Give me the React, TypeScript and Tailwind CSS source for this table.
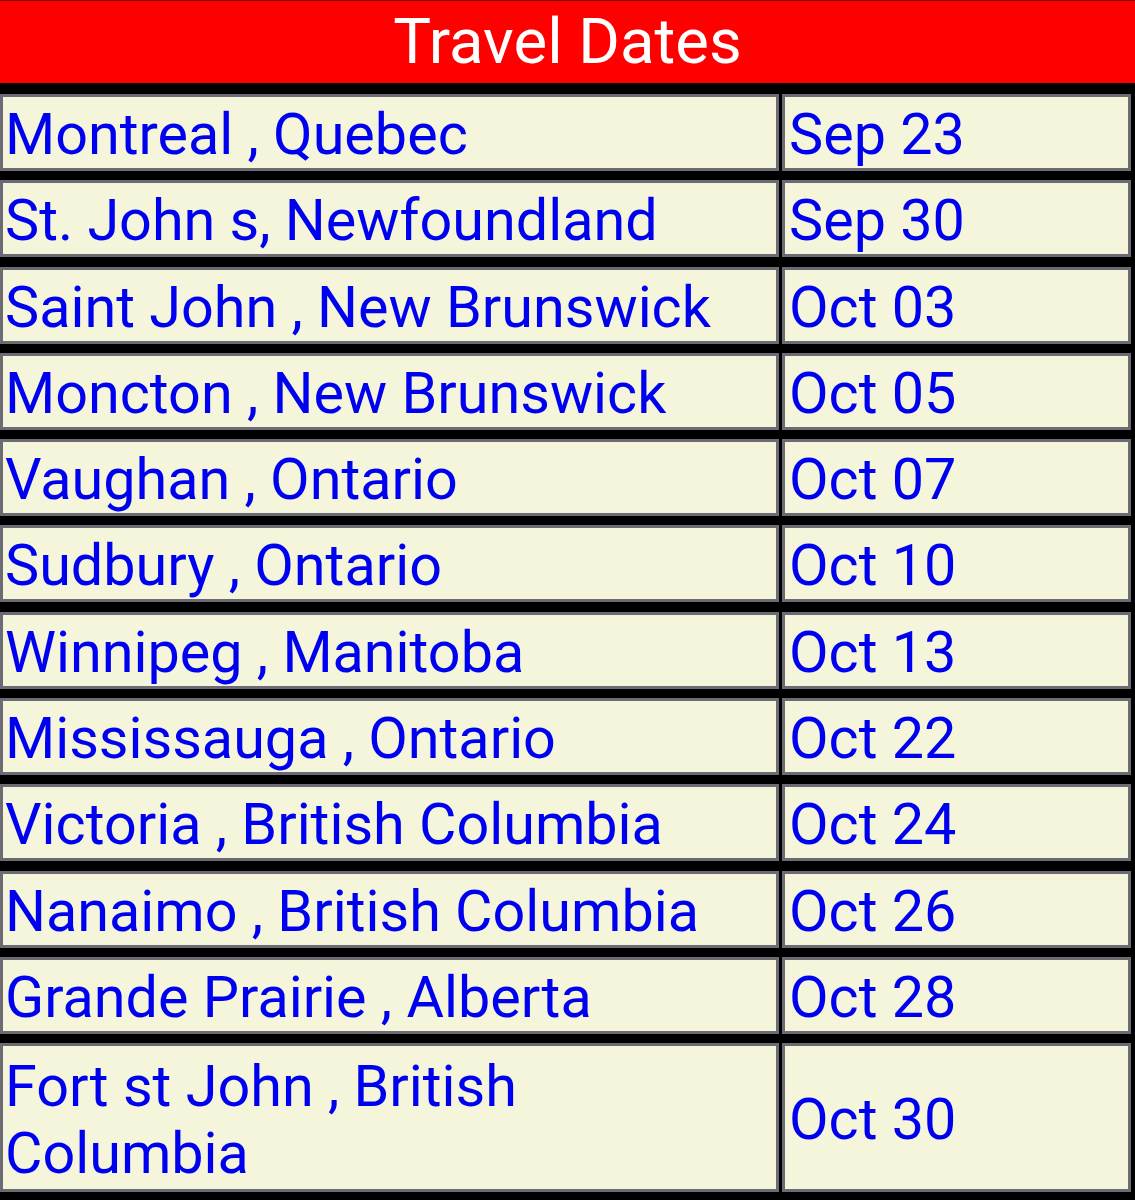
const trips = [
  { place: "Montreal , Quebec", date: "Sep 23" },
  { place: "St. John s, Newfoundland", date: "Sep 30" },
  { place: "Saint John , New Brunswick", date: "Oct 03" },
  { place: "Moncton , New Brunswick", date: "Oct 05" },
  { place: "Vaughan , Ontario", date: "Oct 07" },
  { place: "Sudbury , Ontario", date: "Oct 10" },
  { place: "Winnipeg , Manitoba", date: "Oct 13" },
  { place: "Mississauga , Ontario", date: "Oct 22" },
  { place: "Victoria , British Columbia", date: "Oct 24" },
  { place: "Nanaimo , British Columbia", date: "Oct 26" },
  { place: "Grande Prairie , Alberta", date: "Oct 28" },
  { place: "Fort st John , British Columbia", date: "Oct 30", tall: true },
];

const cell =
  "flex items-center border-[3px] border-[#6c6b74] bg-[#f5f5dc] pt-[4px] text-[57.5px] leading-[67px] text-[#0000f0]";

export default function App() {
  return (
    <div className="min-h-[1200px] w-full bg-black font-['Roboto',sans-serif]">
      <div className="flex h-[83px] items-center justify-center border-t border-[#7a0000] bg-[#ff0000] text-[63.5px] text-white">
        Travel Dates
      </div>
      <div className="grid grid-cols-[779px_349px] gap-x-[3px] gap-y-[9.3px] pt-[11px] pb-2">
        {trips.map((t) => (
          <div key={t.place} className="contents">
            <div
              className={`${cell} pl-0.5 pr-2 ${t.tall ? "h-[149px]" : "h-[77px]"}`}
            >
              <span className={t.tall ? "w-[560px]" : "whitespace-nowrap"}>
                {t.place}
              </span>
            </div>
            <div className={`${cell} pl-1 ${t.tall ? "h-[149px]" : "h-[77px]"}`}>
              {t.date}
            </div>
          </div>
        ))}
      </div>
    </div>
  );
}
